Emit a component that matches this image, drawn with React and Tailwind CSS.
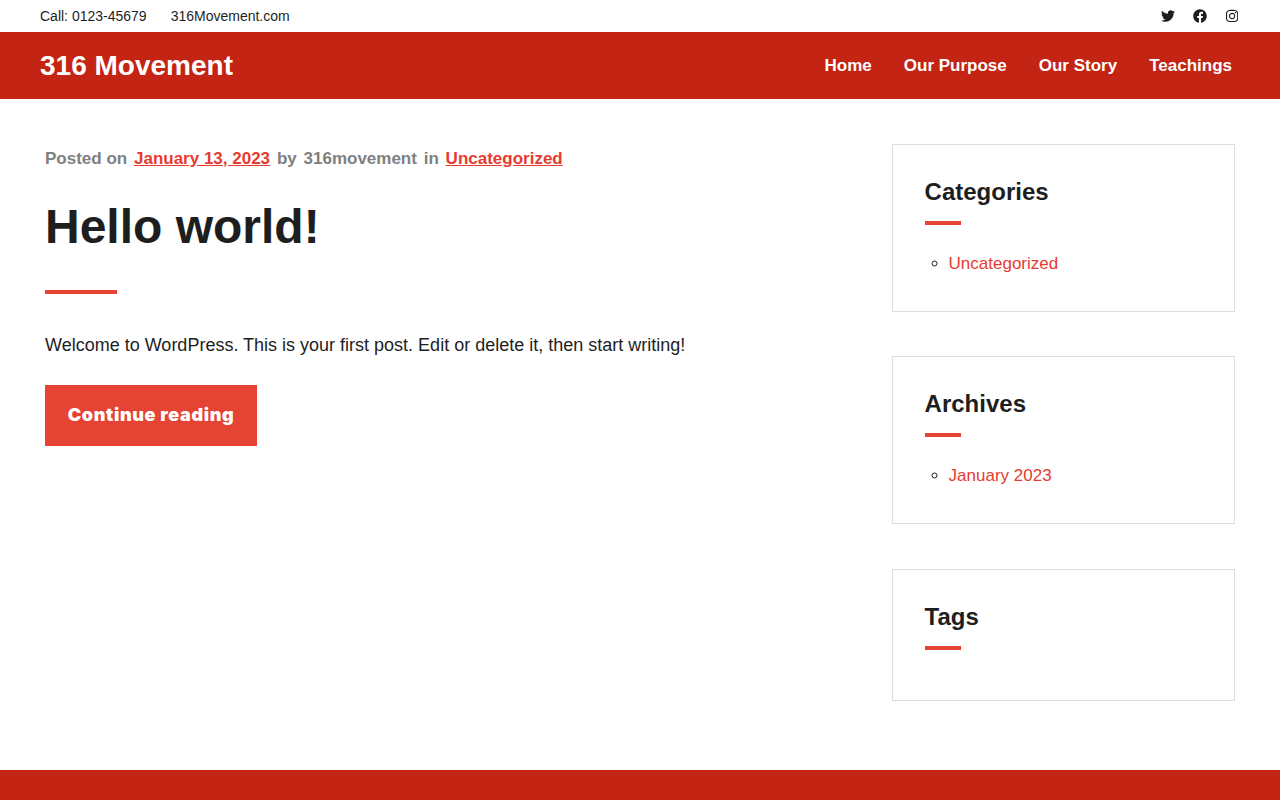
import React from "react";
import { FaTwitter, FaFacebook, FaInstagram } from "react-icons/fa";

const font = "font-['Liberation_Sans',Arial,sans-serif]";

const Widget = ({ title, items, className = "" }) => (
  <section className={`border border-[#dddddd] pl-[31.6px] pr-8 pt-8 pb-8 ${className}`}>
    <h2 className="text-2xl leading-[30px] font-bold text-[#1e1e1e]">{title}</h2>
    <div className="w-9 h-1 bg-[#e54434] mt-[14px]" />
    {items && (
      <ul className="mt-6 ml-6 list-[circle] text-[17px] leading-[30px] text-[#1e1e1e]">
        {items.map((item) => (
          <li key={item}>
            <a href="#" className="text-[#e63b30]">
              {item}
            </a>
          </li>
        ))}
      </ul>
    )}
  </section>
);

export default function App() {
  return (
    <div className={`${font} min-h-[800px] flex flex-col bg-white`}>
      {/* Top bar */}
      <div className="h-8 pl-10 pr-[42px] flex items-center justify-between text-sm text-[#1e1e1e]">
        <div className="flex gap-6">
          <span>Call: 0123-45679</span>
          <span>316Movement.com</span>
        </div>
        <div className="flex items-center gap-[18px] text-sm text-[#1e1e1e]">
          <FaTwitter />
          <FaFacebook className="mr-px" />
          <FaInstagram className="w-[12.25px]" />
        </div>
      </div>

      {/* Header */}
      <header className="h-[67px] bg-[#c32413] pl-10 pr-12 flex items-center justify-between text-white">
        <a href="#" className="text-[28px] font-bold">
          316 Movement
        </a>
        <nav className="flex gap-8 text-[17px] font-bold">
          <a href="#">Home</a>
          <a href="#">Our Purpose</a>
          <a href="#">Our Story</a>
          <a href="#">Teachings</a>
        </nav>
      </header>

      {/* Content */}
      <main className="flex-1 flex justify-between pl-[45px] pr-[45px] pt-[45px]">
        <article className="w-[700px]">
          <div className="flex gap-[6.8px] mt-[2px] text-[17px] leading-[26px] font-bold text-[#808080]">
            <span>Posted on</span>
            <a href="#" className="text-[#e63b30] underline">
              January 13, 2023
            </a>
            <span>by</span>
            <span>316movement</span>
            <span>in</span>
            <a href="#" className="text-[#e63b30] underline">
              Uncategorized
            </a>
          </div>
          <h1 className="mt-[25px] text-5xl leading-[60px] font-bold text-[#1e1e1e]">
            Hello world!
          </h1>
          <div className="w-[72px] h-1 bg-[#e54434] mt-[33px]" />
          <p className="mt-9 text-lg leading-[30px] text-[#1e1e1e]">
            Welcome to WordPress. This is your first post. Edit or delete it, then start writing!
          </p>
          <a
            href="#"
            className="inline-block mt-[25px] w-[212px] h-[61px] bg-[#e54434] text-center font-['Inter',sans-serif] text-lg tracking-[0.65px] leading-[60px] font-black text-white"
          >
            Continue reading
          </a>
        </article>

        <aside className="w-[343px] flex flex-col">
          <Widget title="Categories" items={["Uncategorized"]} />
          <Widget title="Archives" items={["January 2023"]} className="mt-11" />
          <Widget title="Tags" className="mt-[45px] h-[132px]" />
        </aside>
      </main>

      {/* Footer */}
      <footer className="h-[30px] bg-[#c32413]" />
    </div>
  );
}
